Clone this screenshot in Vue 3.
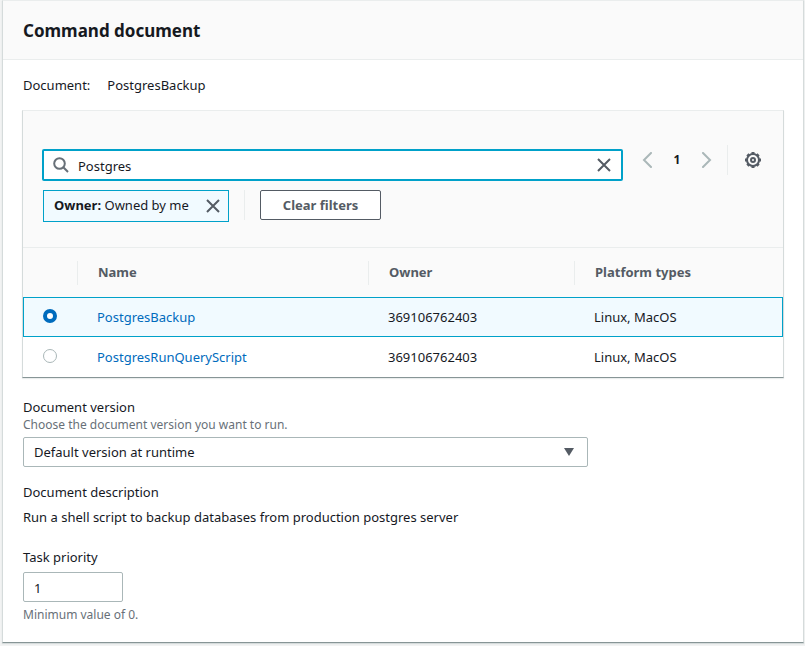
<script setup>
import { ref, computed } from 'vue'

const documents = [
  { name: 'PostgresBackup', owner: '369106762403', platforms: 'Linux, MacOS' },
  { name: 'PostgresRunQueryScript', owner: '369106762403', platforms: 'Linux, MacOS' },
]

const selected = ref('PostgresBackup')
const query = ref('Postgres')
const ownerFilter = ref(true)
const version = ref('default')
const priority = ref('1')

const visibleDocuments = computed(() =>
  documents.filter((d) => d.name.toLowerCase().includes(query.value.toLowerCase()))
)

function clearFilters() {
  ownerFilter.value = false
  query.value = ''
}
</script>

<template>
  <main class="panel">
    <header class="panel-header">
      <h2>Command document</h2>
    </header>

    <div class="panel-body">
      <p class="current"><span>Document:</span><span>{{ selected }}</span></p>

      <section class="table-card">
        <div class="toolbar">
          <div class="filters">
            <div class="search">
              <svg class="search-icon" viewBox="0 0 16 16" aria-hidden="true">
                <circle cx="6.5" cy="6.5" r="5.3" />
                <path d="M10.3 10.3 15 15" />
              </svg>
              <input v-model="query" type="text" aria-label="Search documents" />
              <button class="icon-button" type="button" aria-label="Clear search" @click="query = ''">
                <svg class="close-icon" viewBox="0 0 16 16"><path d="M2 2l12 12M14 2 2 14" /></svg>
              </button>
            </div>
            <div class="tokens">
              <div v-if="ownerFilter" class="token">
                <span><b>Owner:</b> Owned by me</span>
                <button class="icon-button" type="button" aria-label="Remove filter" @click="ownerFilter = false">
                  <svg class="close-icon" viewBox="0 0 16 16"><path d="M2 2l12 12M14 2 2 14" /></svg>
                </button>
              </div>
              <div class="clear">
                <button class="clear-button" type="button" @click="clearFilters">Clear filters</button>
              </div>
            </div>
          </div>

          <div class="tools">
            <nav class="pager" aria-label="Pages">
              <button class="icon-button" type="button" aria-label="Previous page" disabled>
                <svg class="chevron" viewBox="0 0 16 16"><path d="M12 1 5 8l7 7" /></svg>
              </button>
              <button class="icon-button page" type="button">1</button>
              <button class="icon-button" type="button" aria-label="Next page" disabled>
                <svg class="chevron" viewBox="0 0 16 16"><path d="M4 1l7 7-7 7" /></svg>
              </button>
            </nav>
            <div class="settings">
              <button class="icon-button" type="button" aria-label="Preferences">
                <svg class="gear" viewBox="0 0 16 16">
                  <circle cx="8" cy="8" r="6" />
                  <circle cx="8" cy="8" r="2" />
                  <path
                    class="teeth"
                    d="M8 0v2M8 14v2M0 8h2M14 8h2M2.4 2.4l1.4 1.4M12.2 12.2l1.4 1.4M13.6 2.4l-1.4 1.4M3.8 12.2l-1.4 1.4"
                  />
                </svg>
              </button>
            </div>
          </div>
        </div>

        <table>
          <colgroup>
            <col class="col-radio" />
            <col class="col-name" />
            <col class="col-owner" />
            <col />
          </colgroup>
          <thead>
            <tr>
              <th></th>
              <th scope="col"><div>Name</div></th>
              <th scope="col"><div>Owner</div></th>
              <th scope="col"><div>Platform types</div></th>
            </tr>
          </thead>
          <tbody>
            <tr v-for="doc in visibleDocuments" :key="doc.name" :class="{ selected: doc.name === selected }">
              <td class="radio-cell">
                <input v-model="selected" type="radio" name="document" :value="doc.name" :aria-label="doc.name" />
              </td>
              <td><a href="#">{{ doc.name }}</a></td>
              <td>{{ doc.owner }}</td>
              <td>{{ doc.platforms }}</td>
            </tr>
          </tbody>
        </table>
      </section>

      <div class="field">
        <label for="version">Document version</label>
        <p class="hint">Choose the document version you want to run.</p>
        <div class="select">
          <select id="version" v-model="version">
            <option value="default">Default version at runtime</option>
          </select>
          <svg viewBox="0 0 12 10" aria-hidden="true"><path d="M1 1h10L6 9z" /></svg>
        </div>
      </div>

      <div class="description">
        <h3>Document description</h3>
        <p>Run a shell script to backup databases from production postgres server</p>
      </div>

      <div class="field priority">
        <label for="priority">Task priority</label>
        <input id="priority" v-model="priority" type="text" inputmode="numeric" />
        <p class="hint">Minimum value of 0.</p>
      </div>
    </div>
  </main>
</template>

<style>
body {
  background: #f2f3f3;
}
</style>

<style scoped>
* {
  box-sizing: border-box;
}

.panel {
  margin: 0 1px 3px 2px;
  border: 1px solid #d5dbdb;
  border-top-color: #eaeded;
  border-bottom-color: #879596;
  background: #fff;
  box-shadow: 0 1px 1px #d5dbdb;
  color: #16191f;
  font: 13px/20px "Noto Sans", sans-serif;
}

input,
select,
button {
  margin: 0;
  color: inherit;
  font: inherit;
}

h2,
h3,
p {
  margin: 0;
}

.panel-header {
  padding: 18px 20px 16px;
  border-bottom: 1px solid #eaeded;
  background: #fafafa;
}

h2 {
  font-size: 17px;
  line-height: 24px;
}

.panel-body {
  padding: 15px 20px 19px;
}

.current {
  display: flex;
  gap: 17px;
  margin-bottom: 15px;
}

.table-card {
  margin: 0 -1px 19px;
  border: 1px solid #d5dbdb;
  border-top-color: #eaeded;
  border-bottom-color: #879596;
  box-shadow: 0 1px 1px #eaeded;
}

.toolbar {
  display: flex;
  gap: 21px;
  padding: 34px 20px 25px;
  border-bottom: 1px solid #eaeded;
  background: #fafafa;
}

.filters {
  flex: 1;
  padding-top: 4px;
}

.search {
  display: flex;
  align-items: center;
  height: 32px;
  margin: 0 -1px 9px;
  padding: 0 9px;
  border: 2px solid #00a1c9;
  border-radius: 2px;
  background: #fff;
}

.search input {
  flex: 1;
  min-width: 0;
  padding: 2px 9px 0;
  border: 0;
  outline: 0;
  background: none;
}

svg {
  display: block;
  fill: none;
}

.icon-button {
  padding: 0;
  border: 0;
  background: none;
}

.search-icon {
  width: 16px;
  height: 16px;
  stroke: #687078;
  stroke-width: 2;
}

.close-icon {
  width: 16px;
  height: 16px;
  stroke: #545b64;
  stroke-width: 2;
}

.tokens {
  display: flex;
  gap: 15px;
}

.token {
  display: flex;
  align-items: center;
  gap: 16px;
  height: 32px;
  padding: 0 7px 0 10px;
  border: 1px solid #00a1c9;
  background: #f1faff;
}

.token span {
  padding-bottom: 2px;
}

.clear {
  height: 30px;
  padding-left: 15px;
  border-left: 1px solid #eaeded;
}

.clear-button {
  height: 30px;
  padding: 0 22px;
  border: 1px solid #545b64;
  border-radius: 2px;
  background: #fff;
  color: #545b64;
  font-weight: 700;
}

.tools {
  display: flex;
  height: 30px;
}

.pager {
  display: flex;
  align-items: center;
  gap: 16px;
  margin-left: -4px;
  padding-right: 12px;
}

.page {
  width: 12px;
  font-size: 12px;
  font-weight: 700;
}

.chevron {
  width: 16px;
  height: 16px;
  stroke: #aab7b8;
  stroke-width: 2;
  stroke-linecap: round;
}

.settings {
  display: flex;
  align-items: center;
  padding: 0 2px 0 17px;
  border-left: 1px solid #eaeded;
}

.gear {
  width: 16px;
  height: 16px;
  stroke: #545b64;
  stroke-width: 2;
}

.teeth {
  stroke-width: 3;
}

table {
  width: 100%;
  border-collapse: collapse;
  table-layout: fixed;
}

.col-radio {
  width: 54px;
}

.col-name {
  width: 291px;
}

.col-owner {
  width: 206px;
}

thead {
  background: #fafafa;
}

th {
  height: 49px;
  padding: 0;
  color: #545b64;
  text-align: left;
}

th div {
  padding: 1px 20px 3px;
  border-left: 1px solid #eaeded;
}

td {
  height: 40px;
  padding: 0 20px;
}

td.radio-cell {
  padding: 0 0 2px 20px;
}

tr.selected {
  outline: 1px solid #00a1c9;
  outline-offset: -1px;
  background: #f1faff;
}

a {
  color: #006bbd;
  text-decoration: none;
}

input[type="radio"] {
  display: block;
  width: 14px;
  height: 14px;
  border: 1px solid #aab7b8;
  border-radius: 50%;
  background: #fff;
  appearance: none;
}

input[type="radio"]:checked {
  border: 4px solid #006bbd;
}

.field label {
  display: block;
}

.hint {
  color: #687078;
  font-size: 12px;
  line-height: 16px;
}

.select {
  display: grid;
  align-items: center;
  width: 565px;
  max-width: 100%;
  margin: 4px 0 15px;
}

.select select,
.select svg {
  grid-area: 1 / 1;
}

.select select,
.priority input {
  height: 30px;
  padding: 0 10px;
  border: 1px solid #aab7b8;
  border-radius: 2px;
  background: #fff;
  appearance: none;
}

.select svg {
  justify-self: end;
  width: 12px;
  height: 10px;
  margin-right: 13px;
  fill: #545b64;
  pointer-events: none;
}

.description {
  margin-bottom: 20px;
}

h3 {
  margin-bottom: 5px;
  font: inherit;
}

.priority input {
  display: block;
  width: 100px;
  margin: 5px 0;
  padding-top: 2px;
}
</style>
